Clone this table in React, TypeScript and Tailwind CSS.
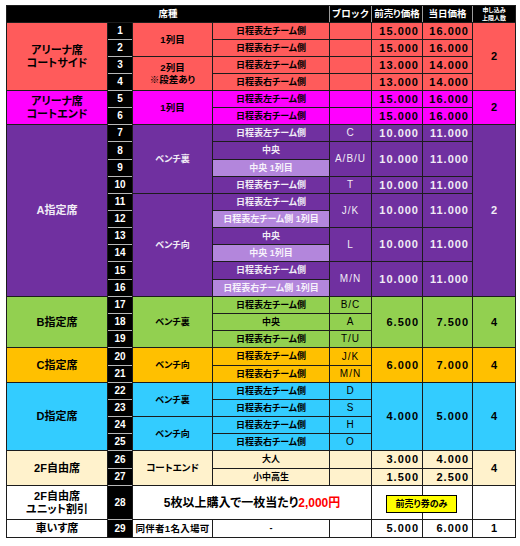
import React from "react";

const RED = "bg-[#ff5b5b] text-black";
const MAG = "bg-[#ff00ff] text-black";
const PUR = "bg-[#7030a0] text-[#f1ecf6]";
const LPUR = "bg-[#b386dc] text-[#f7f2fb]";
const GRN = "bg-[#92d050] text-black";
const GLD = "bg-[#ffc000] text-black";
const BLU = "bg-[#33ccff] text-black";
const CRM = "bg-[#fff2cc] text-black";
const WHT = "bg-white text-black";

type P = { c: string; s?: string; children?: React.ReactNode };

const Seat = ({ c, s = "", children }: P) => (
  <div className={`flex items-center justify-center text-center font-bold text-[11px] leading-[13px] ${c} ${s}`}>
    <div>{children}</div>
  </div>
);
const Num = ({ n }: { n: number }) => (
  <div
    className={`flex items-center justify-center bg-black text-white font-bold text-[10px] leading-none ${
      n > 1 ? "shadow-[0_-1px_0_#b8b8b8]" : ""
    }`}
  >
    {n}
  </div>
);
const Row = ({ c, s = "", children }: P) => (
  <div className={`flex items-center justify-center text-center font-bold text-[9.5px] leading-[12px] ${c} ${s}`}>
    <div>{children}</div>
  </div>
);
const Det = ({ c, s = "", children }: P) => (
  <div className={`flex items-center justify-center text-center font-bold text-[9px] leading-none whitespace-nowrap ${c} ${s}`}>
    {children}
  </div>
);
const Blk = ({ c, s = "", children }: P) => (
  <div className={`flex items-center justify-center text-center text-[10px] tracking-[1px] leading-none ${c} ${s}`}>
    {children}
  </div>
);
const Pr = ({ c, s = "", children }: P) => (
  <div className={`flex items-center justify-end pr-[3px] font-bold text-[11px] tracking-[1px] leading-none ${c} ${s}`}>
    {children}
  </div>
);
const Lim = ({ c, s = "", children }: P) => (
  <div className={`flex items-center justify-center font-bold text-[11px] leading-none ${c} ${s}`}>{children}</div>
);

const L = "日程表左チーム側";
const R = "日程表右チーム側";

export default function App() {
  return (
    <div className="min-h-[546px] bg-white pt-[5px] pl-[6px] font-['Liberation_Sans','Noto_Sans_CJK_JP',sans-serif] [font-feature-settings:'palt']">
      <div className="w-[510px] grid grid-cols-[100px_24px_79px_116px_41px_50px_49px_42px] grid-rows-[16px_16px_16px_16px_16px_16px_16px_16px_17px_16px_16px_16px_16px_16px_16px_17px_16px_16px_16px_16px_17px_16px_16px_16px_16px_16px_17px_16px_33px_17px] gap-px bg-[#1c1c1c] p-px">
        {/* header */}
        <div className="col-span-4 flex items-center justify-center bg-black text-white font-bold text-[9.5px]">席種</div>
        <div className="flex items-center justify-center bg-black text-white font-bold text-[9.5px] tracking-[0.5px] shadow-[-1px_0_0_#9c9c9c]">ブロック</div>
        <div className="flex items-center justify-center bg-black text-white font-bold text-[9.5px] shadow-[-1px_0_0_#9c9c9c]">前売り価格</div>
        <div className="flex items-center justify-center bg-black text-white font-bold text-[9.5px] shadow-[-1px_0_0_#9c9c9c]">当日価格</div>
        <div className="flex flex-col items-center justify-center bg-black text-white font-bold text-[6px] leading-[8px] shadow-[-1px_0_0_#9c9c9c]">
          <span>申し込み</span>
          <span>上限人数</span>
        </div>

        {/* 1 */}
        <Seat c={RED} s="row-span-4">アリーナ席<br />コートサイド</Seat>
        <Num n={1} />
        <Row c={RED} s="row-span-2">1列目</Row>
        <Det c={RED}>{L}</Det>
        <Blk c={RED}></Blk>
        <Pr c={RED}>15.000</Pr>
        <Pr c={RED}>16.000</Pr>
        <Lim c={RED} s="row-span-4">2</Lim>
        {/* 2 */}
        <Num n={2} />
        <Det c={RED}>{R}</Det>
        <Blk c={RED}></Blk>
        <Pr c={RED}>15.000</Pr>
        <Pr c={RED}>16.000</Pr>
        {/* 3 */}
        <Num n={3} />
        <Row c={RED} s="row-span-2">2列目<br />※段差あり</Row>
        <Det c={RED}>{L}</Det>
        <Blk c={RED}></Blk>
        <Pr c={RED}>13.000</Pr>
        <Pr c={RED}>14.000</Pr>
        {/* 4 */}
        <Num n={4} />
        <Det c={RED}>{R}</Det>
        <Blk c={RED}></Blk>
        <Pr c={RED}>13.000</Pr>
        <Pr c={RED}>14.000</Pr>
        {/* 5 */}
        <Seat c={MAG} s="row-span-2">アリーナ席<br />コートエンド</Seat>
        <Num n={5} />
        <Row c={MAG} s="row-span-2">1列目</Row>
        <Det c={MAG}>{L}</Det>
        <Blk c={MAG}></Blk>
        <Pr c={MAG}>15.000</Pr>
        <Pr c={MAG}>16.000</Pr>
        <Lim c={MAG} s="row-span-2">2</Lim>
        {/* 6 */}
        <Num n={6} />
        <Det c={MAG}>{R}</Det>
        <Blk c={MAG}></Blk>
        <Pr c={MAG}>15.000</Pr>
        <Pr c={MAG}>16.000</Pr>
        {/* 7 */}
        <Seat c={PUR} s="row-span-10">A指定席</Seat>
        <Num n={7} />
        <Row c={PUR} s="row-span-4 text-[9px]">ベンチ裏</Row>
        <Det c={PUR}>{L}</Det>
        <Blk c={PUR}>C</Blk>
        <Pr c={PUR}>10.000</Pr>
        <Pr c={PUR}>11.000</Pr>
        <Lim c={PUR} s="row-span-10">2</Lim>
        {/* 8 */}
        <Num n={8} />
        <Det c={PUR}>中央</Det>
        <Blk c={PUR} s="row-span-2">A/B/U</Blk>
        <Pr c={PUR} s="row-span-2">10.000</Pr>
        <Pr c={PUR} s="row-span-2">11.000</Pr>
        {/* 9 */}
        <Num n={9} />
        <Det c={LPUR}>中央 1列目</Det>
        {/* 10 */}
        <Num n={10} />
        <Det c={PUR}>{R}</Det>
        <Blk c={PUR}>T</Blk>
        <Pr c={PUR}>10.000</Pr>
        <Pr c={PUR}>11.000</Pr>
        {/* 11 */}
        <Num n={11} />
        <Row c={PUR} s="row-span-6 text-[9px]">ベンチ向</Row>
        <Det c={PUR}>{L}</Det>
        <Blk c={PUR} s="row-span-2">J/K</Blk>
        <Pr c={PUR} s="row-span-2">10.000</Pr>
        <Pr c={PUR} s="row-span-2">11.000</Pr>
        {/* 12 */}
        <Num n={12} />
        <Det c={LPUR}>{L} 1列目</Det>
        {/* 13 */}
        <Num n={13} />
        <Det c={PUR}>中央</Det>
        <Blk c={PUR} s="row-span-2">L</Blk>
        <Pr c={PUR} s="row-span-2">10.000</Pr>
        <Pr c={PUR} s="row-span-2">11.000</Pr>
        {/* 14 */}
        <Num n={14} />
        <Det c={LPUR}>中央 1列目</Det>
        {/* 15 */}
        <Num n={15} />
        <Det c={PUR}>{R}</Det>
        <Blk c={PUR} s="row-span-2">M/N</Blk>
        <Pr c={PUR} s="row-span-2">10.000</Pr>
        <Pr c={PUR} s="row-span-2">11.000</Pr>
        {/* 16 */}
        <Num n={16} />
        <Det c={LPUR}>{R} 1列目</Det>
        {/* 17 */}
        <Seat c={GRN} s="row-span-3">B指定席</Seat>
        <Num n={17} />
        <Row c={GRN} s="row-span-3 text-[9px]">ベンチ裏</Row>
        <Det c={GRN}>{L}</Det>
        <Blk c={GRN}>B/C</Blk>
        <Pr c={GRN} s="row-span-3">6.500</Pr>
        <Pr c={GRN} s="row-span-3">7.500</Pr>
        <Lim c={GRN} s="row-span-3">4</Lim>
        {/* 18 */}
        <Num n={18} />
        <Det c={GRN}>中央</Det>
        <Blk c={GRN}>A</Blk>
        {/* 19 */}
        <Num n={19} />
        <Det c={GRN}>{R}</Det>
        <Blk c={GRN}>T/U</Blk>
        {/* 20 */}
        <Seat c={GLD} s="row-span-2">C指定席</Seat>
        <Num n={20} />
        <Row c={GLD} s="row-span-2 text-[9px]">ベンチ向</Row>
        <Det c={GLD}>{L}</Det>
        <Blk c={GLD}>J/K</Blk>
        <Pr c={GLD} s="row-span-2">6.000</Pr>
        <Pr c={GLD} s="row-span-2">7.000</Pr>
        <Lim c={GLD} s="row-span-2">4</Lim>
        {/* 21 */}
        <Num n={21} />
        <Det c={GLD}>{R}</Det>
        <Blk c={GLD}>M/N</Blk>
        {/* 22 */}
        <Seat c={BLU} s="row-span-4">D指定席</Seat>
        <Num n={22} />
        <Row c={BLU} s="row-span-2 text-[9px]">ベンチ裏</Row>
        <Det c={BLU}>{L}</Det>
        <Blk c={BLU}>D</Blk>
        <Pr c={BLU} s="row-span-4">4.000</Pr>
        <Pr c={BLU} s="row-span-4">5.000</Pr>
        <Lim c={BLU} s="row-span-4">4</Lim>
        {/* 23 */}
        <Num n={23} />
        <Det c={BLU}>{R}</Det>
        <Blk c={BLU}>S</Blk>
        {/* 24 */}
        <Num n={24} />
        <Row c={BLU} s="row-span-2 text-[9px]">ベンチ向</Row>
        <Det c={BLU}>{L}</Det>
        <Blk c={BLU}>H</Blk>
        {/* 25 */}
        <Num n={25} />
        <Det c={BLU}>{R}</Det>
        <Blk c={BLU}>O</Blk>
        {/* 26 */}
        <Seat c={CRM} s="row-span-2">2F自由席</Seat>
        <Num n={26} />
        <Row c={CRM} s="row-span-2 text-[7.5px]">コートエンド</Row>
        <Det c={CRM}>大人</Det>
        <Blk c={CRM}></Blk>
        <Pr c={CRM}>3.000</Pr>
        <Pr c={CRM}>4.000</Pr>
        <Lim c={CRM} s="row-span-2">4</Lim>
        {/* 27 */}
        <Num n={27} />
        <Det c={CRM}>小中高生</Det>
        <Blk c={CRM}></Blk>
        <Pr c={CRM}>1.500</Pr>
        <Pr c={CRM}>2.500</Pr>
        {/* 28 */}
        <Seat c={WHT}>2F自由席<br />ユニット割引</Seat>
        <Num n={28} />
        <div className="col-span-3 flex items-center justify-center bg-white text-black font-bold text-[12px] leading-none whitespace-nowrap">
          5枚以上購入で一枚当たり<span className="text-[#ff0000]">2,000円</span>
        </div>
        <div className="col-span-2 relative grid grid-cols-[50px_49px] gap-px bg-[#1c1c1c]">
          <div className="bg-white" />
          <div className="bg-white" />
          <div className="absolute left-[14px] top-[9px] w-[71px] h-[18px] flex items-center justify-center bg-[#ffff00] border border-black text-black font-bold text-[9px] leading-none">
            前売り券のみ
          </div>
        </div>
        <Lim c={WHT}></Lim>
        {/* 29 */}
        <Seat c={WHT}>車いす席</Seat>
        <Num n={29} />
        <Row c={WHT} s="text-[8.5px] tracking-[0.3px]">同伴者1名入場可</Row>
        <Det c={WHT}>-</Det>
        <Blk c={WHT}></Blk>
        <Pr c={WHT}>5.000</Pr>
        <Pr c={WHT}>6.000</Pr>
        <Lim c={WHT}>1</Lim>
      </div>
    </div>
  );
}
